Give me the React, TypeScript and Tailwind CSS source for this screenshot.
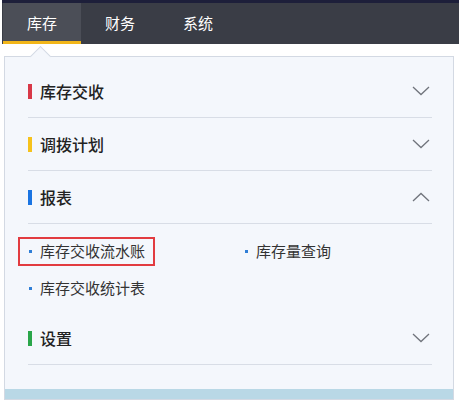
import { Fragment } from "react";

const sections = [
  { title: "库存交收", color: "bg-[#d83848]", open: false },
  { title: "调拨计划", color: "bg-[#f6c21c]", open: false },
  { title: "报表", color: "bg-[#1a74e2]", open: true },
  { title: "设置", color: "bg-[#2aa64a]", open: false },
];

function Chevron({ up }: { up?: boolean }) {
  return (
    <svg width="18" height="10" viewBox="0 0 18 10" className="text-[#70747c]">
      <path
        d={up ? "M1 9 L9 1.5 L17 9" : "M1 1 L9 8.5 L17 1"}
        fill="none"
        stroke="currentColor"
        strokeWidth="1.3"
      />
    </svg>
  );
}

function Item({ label, boxed }: { label: string; boxed?: boolean }) {
  return (
    <div className="flex h-[37px] items-center">
      <div
        className={
          boxed
            ? "-ml-[10px] flex h-[29px] items-center border-2 border-[#e23b40] pl-[9px] pr-[8px]"
            : "flex items-center pl-px"
        }
      >
        <span className="mr-[8px] h-[3px] w-[3px] bg-[#2f7ed6]" />
        <span className="text-[15px] text-[#333]">{label}</span>
      </div>
    </div>
  );
}

export default function App() {
  return (
    <div
      className="relative h-[401px] w-[459px] overflow-hidden bg-white"
      style={{ fontFamily: '"Noto Sans CJK SC", "Noto Sans", sans-serif' }}
    >
      {/* top nav */}
      <div className="ml-[2px] h-[44px] border-t-[3px] border-[#1d1f3a] bg-[#3a3d46]">
        <div className="flex h-full pl-px text-[15px] text-white">
          <div className="flex w-[78px] items-center justify-center border-b-[3px] border-[#f2b619] bg-[#4b4e57] pt-[2px]">
            库存
          </div>
          <div className="flex w-[78px] items-center justify-center">财务</div>
          <div className="flex w-[78px] items-center justify-center">系统</div>
        </div>
      </div>

      {/* dropdown panel */}
      <div className="relative ml-[4px] mt-[12px] w-[450px] border border-[#d3d9e3] bg-[#f4f7fc]">
        {/* notch */}
        <div className="absolute -top-[8px] left-[28px] h-[15px] w-[15px] rotate-45 border-l border-t border-[#d3d9e3] bg-[#f4f7fc]" />

        <div className="relative pl-[23px] pr-[21px] pt-[8px] pb-[24px]">
          {sections.map((s) => (
            <Fragment key={s.title}>
              <div className="flex h-[53px] items-center border-b border-[#d8dde6]">
                <span className={`mr-[8px] h-[15px] w-[4px] ${s.color}`} />
                <span className="text-[16px] font-medium text-[#222]">{s.title}</span>
                <span className="ml-auto mr-[2px] flex">
                  <Chevron up={s.open} />
                </span>
              </div>
              {s.open && (
                <div className="grid grid-cols-[216px_1fr] pt-[9px] pb-[5px]">
                  <Item label="库存交收流水账" boxed />
                  <Item label="库存量查询" />
                  <Item label="库存交收统计表" />
                </div>
              )}
            </Fragment>
          ))}
        </div>
        <div className="h-[10px] bg-[#b9d8e6]" />
      </div>
    </div>
  );
}
